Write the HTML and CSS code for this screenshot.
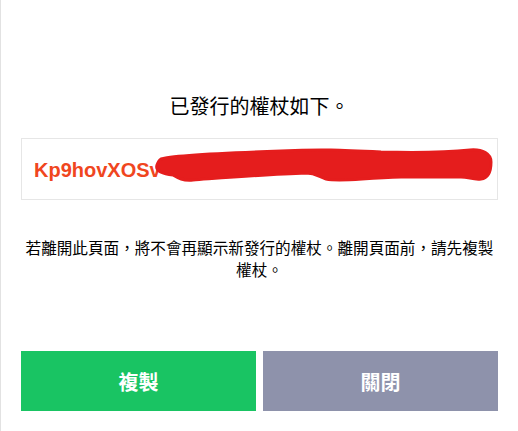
FILE: index.html
```html
<!DOCTYPE html>
<html lang="zh-Hant">
<head>
<meta charset="utf-8">
<title>權杖</title>
<link rel="stylesheet" href="styles.css">
</head>
<body>
<div class="page">
  <h1 class="title">已發行的權杖如下。</h1>
  <div class="token-box">
    <span class="token">Kp9hovXOSv</span>
    <svg class="scribble" width="477" height="62" viewBox="0 0 477 62" aria-hidden="true">
      <path d="M140,21 C150,17 200,15 260,13 C300,11 320,12 360,14 C400,15 430,14 449,12 C462,11 470,16 470,24 C470,32 468,40 460,41 C452,42 448,39 440,39 L380,39 C340,40 320,44 305,41 C298,39 295,35 285,35 C250,36 200,40 172,42 C162,43 157,40 152,37 C142,36 134,33 136,27 C137,24 138,22 140,21 Z" fill="#e51d1d" stroke="#e51d1d" stroke-width="3" stroke-linejoin="round"/>
    </svg>
  </div>
  <p class="note">若離開此頁面，將不會再顯示新發行的權杖。離開頁面前，請先複製權杖。</p>
  <div class="actions">
    <button class="btn btn-copy">複製</button>
    <button class="btn btn-close">關閉</button>
  </div>
</div>
</body>
</html>
```

FILE: styles.css
```css
html, body {
  margin: 0;
  padding: 0;
  background: #ffffff;
}

.page {
  box-sizing: border-box;
  min-height: 431px;
  border-left: 1px solid #e2e2e2;
  padding: 96px 20px 0 20px;
  display: flex;
  flex-direction: column;
  font-family: "Noto Sans CJK TC", "Noto Sans CJK SC", sans-serif;
  color: #111111;
}

.title {
  margin: 0;
  font-size: 20px;
  line-height: 20px;
  font-weight: normal;
  text-align: center;
  color: #000000;
}

.token-box {
  position: relative;
  box-sizing: border-box;
  margin-top: 22px;
  height: 62px;
  border: 1px solid #e6e6e6;
  display: flex;
  align-items: center;
  padding-left: 12px;
  overflow: hidden;
}

.token {
  font-family: "Liberation Sans", Arial, sans-serif;
  font-weight: bold;
  font-size: 20px;
  line-height: 24px;
  color: #f0461e;
  margin-top: 1px;
}

.scribble {
  position: absolute;
  left: -1px;
  top: -1px;
}

.note {
  margin: 36px 0 0 0;
  font-size: 15.6px;
  line-height: 22px;
  text-align: center;
  color: #000000;
}

.actions {
  margin-top: 71px;
  display: flex;
  gap: 7px;
}

.btn {
  flex: 1;
  height: 60px;
  border: none;
  padding: 0;
  margin: 0;
  font-family: "Noto Sans CJK TC", "Noto Sans CJK SC", sans-serif;
  font-size: 20px;
  font-weight: bold;
  color: #ffffff;
}

.btn-copy {
  background: #19c463;
}

.btn-close {
  background: #8e92ab;
}
```
